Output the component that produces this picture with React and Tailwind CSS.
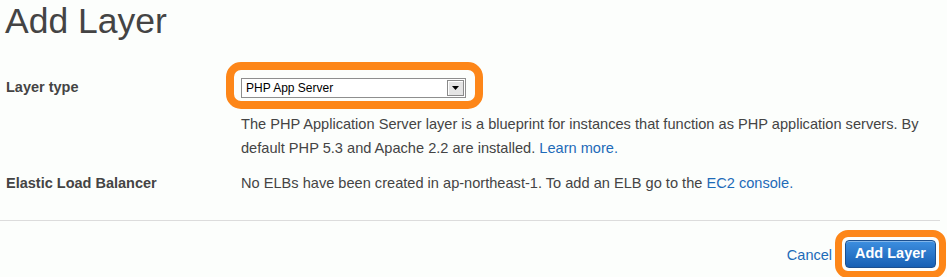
export default function App() {
  const font = { fontFamily: '"Liberation Sans", Arial, sans-serif' };

  return (
    <div
      className="w-[947px] h-[277px] bg-[#fcfefc] text-[#444] pl-[5px] overflow-hidden"
      style={font}
    >
      <h1 className="text-[35.5px] leading-[40px] pt-[1px] text-[#444] font-normal">
        Add Layer
      </h1>

      <div className="grid grid-cols-[221px_1fr] mt-[21px]">
        {/* layer type row */}
        <div className="flex items-center pl-[1px] pt-[5px] text-[14.5px] font-bold">
          Layer type
        </div>
        <div>
          <div className="inline-block border-[8px] border-[#fd8618] rounded-[15px] pl-[7px] pr-[9px] pt-[8px] pb-[3px]">
            <div className="flex items-center w-[225px] h-[20px] border border-[#8e8e8e] bg-white">
              <span className="flex-1 pl-[4px] text-[12px] leading-none text-black">
                PHP App Server
              </span>
              <span className="flex items-center justify-center w-[17px] h-[16px] mr-[1px] border border-[#8a8a8a] bg-[#e4e4e4] shadow-[inset_1px_1px_0_#fff]">
                <svg width="7" height="4" viewBox="0 0 7 4">
                  <path d="M0 0h7L3.5 4z" fill="#000" />
                </svg>
              </span>
            </div>
          </div>
        </div>

        <div />
        <p className="mt-[3px] pl-[15px] pr-[10px] text-[14.6px] leading-[24px]">
          The PHP Application Server layer is a blueprint for instances that
          function as PHP application servers. By default PHP 5.3 and Apache
          2.2 are installed. <span className="text-[#1e6bb8]">Learn more.</span>
        </p>

        {/* load balancer row */}
        <div className="mt-[11px] pl-[1px] text-[14.5px] leading-[24px] font-bold">
          Elastic Load Balancer
        </div>
        <p className="mt-[11px] pl-[15px] text-[14.6px] leading-[24px]">
          No ELBs have been created in ap-northeast-1. To add an ELB go to the{" "}
          <span className="text-[#1e6bb8]">EC2 console.</span>
        </p>
      </div>

      <div className="mt-[25px] -ml-[5px] w-[940px] h-px bg-[#dcdcdc]" />

      <div className="mt-[9px] flex items-center justify-end pr-[1px]">
        <a className="text-[14.5px] text-[#1e6bb8] mr-[3px] pt-[4px]">Cancel</a>
        <div className="border-[7px] border-[#fd8618] rounded-[13px] p-[3px]">
          <button className="w-[91px] h-[28px] rounded-[4px] border border-[#1b4f8f] bg-gradient-to-b from-[#3d8fe0] to-[#1760b4] text-white text-[14.5px] font-bold shadow-[inset_0_1px_0_rgba(255,255,255,0.35)]">
            Add Layer
          </button>
        </div>
      </div>
    </div>
  );
}
